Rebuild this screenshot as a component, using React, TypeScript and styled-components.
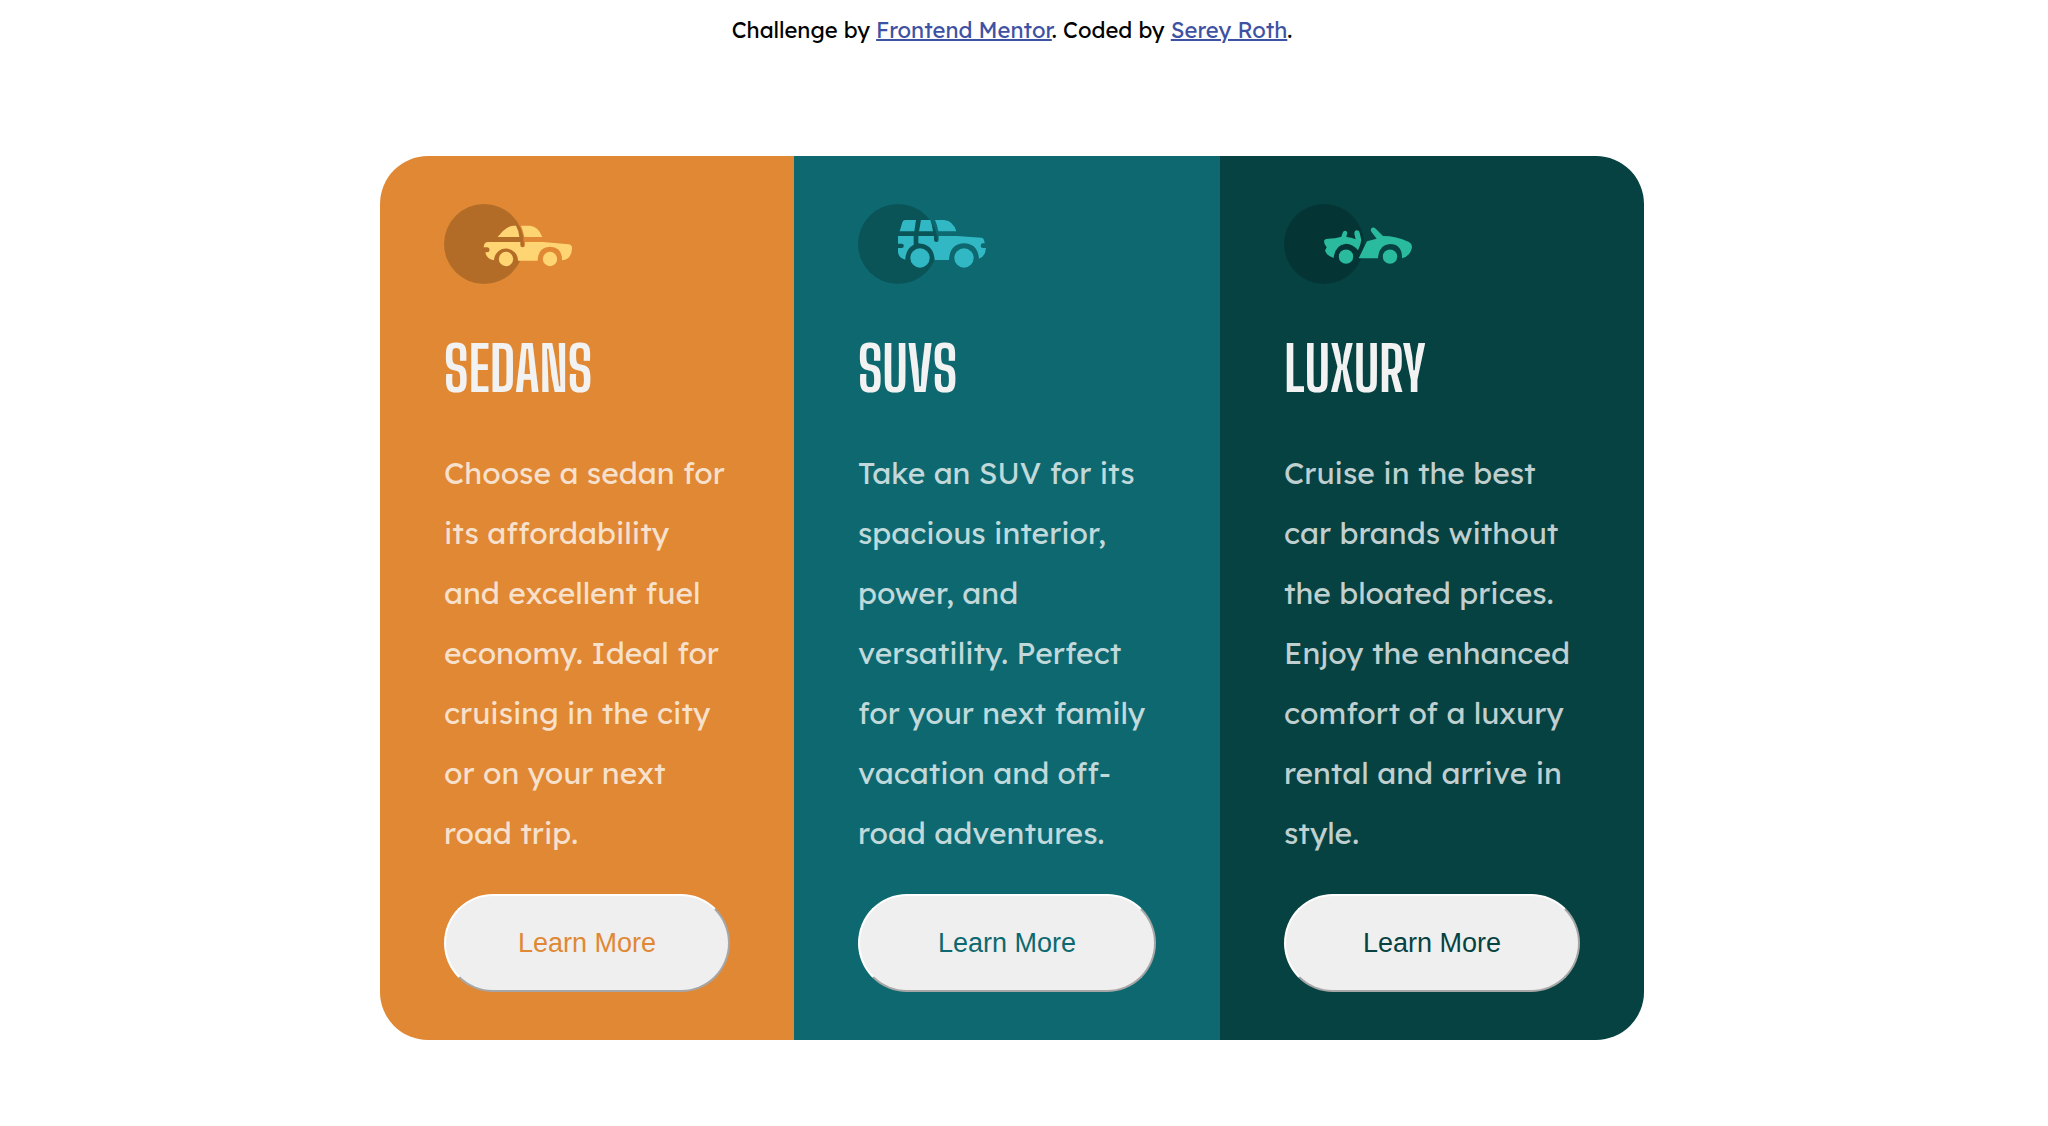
import React from "react";
import styled, { createGlobalStyle } from "styled-components";

const GlobalStyle = createGlobalStyle`
  * {
    box-sizing: border-box;
  }

  body {
    margin: 0;
    background: #ffffff;
    font-family: "Lexend Deca", Lexend, Inter, "Noto Sans", sans-serif;
  }
`;

const Page = styled.div`
  display: flex;
  flex-direction: column;
  align-items: center;
  padding: 16px 56px 64px 32px;
`;

const Attribution = styled.header`
  margin-bottom: 112px;
  font-size: 22px;
  line-height: 28px;
  text-align: center;
  color: #000000;
`;

const AttributionLink = styled.a`
  color: #3e52a3;
  text-decoration-thickness: 2px;
`;

const Cards = styled.main`
  display: grid;
  grid-template-columns: 414fr 426fr 424fr;
  width: 100%;
  max-width: 1264px;
  border-radius: 48px;
  overflow: hidden;
`;

const Card = styled.section<{ $color: string }>`
  display: flex;
  flex-direction: column;
  padding: 48px 64px;
  background: ${({ $color }) => $color};
`;

const Icon = styled.svg`
  display: block;
  width: 128px;
  height: 80px;
`;

const Title = styled.h2`
  margin: 45px 0 34px;
  font-family: "Big Shoulders Display", "Roboto Condensed", "Liberation Sans Narrow", sans-serif;
  font-size: 60px;
  font-weight: 700;
  line-height: 80px;
  text-transform: uppercase;
  color: #f2f2f2;
`;

const Description = styled.p`
  margin: 0 0 31px;
  font-size: 30px;
  line-height: 60px;
  color: rgba(255, 255, 255, 0.75);
`;

const LearnMore = styled.button<{ $color: string }>`
  width: 100%;
  height: 98px;
  margin-top: auto;
  border: 2px solid;
  border-color: #ffffff #a6a6a6 #a6a6a6 #ffffff;
  border-radius: 50px;
  background: #efefef;
  font-family: "Liberation Sans", Arial, sans-serif;
  font-size: 27px;
  color: ${({ $color }) => $color};
  cursor: pointer;
`;

const SedanIcon = () => (
  <Icon viewBox="42 42 384 240" aria-hidden="true">
    <circle cx="162" cy="162" r="120" fill="#000" opacity="0.2" />
    <g fill="#ffd473">
      <path d="M203 141C215 125 232 108 250 107H258Q266 120 268 141Z" />
      <path d="M273 107H300Q325 109 337 141H283Q279 122 273 107Z" />
      <path d="M174 156H271V165q0 7 7 7q7 0 7-7V156H340L415 163Q427 164 426 176Q424 208 396 211Q397 171 360 170Q324 171 323 212H264A36 36 0 0 0 192 211Q170 208 166 187H171a7.500 7.500 0 0 0 0-15H161Q162 156 174 156Z" />
      <circle cx="228" cy="207" r="21.500" />
      <circle cx="360" cy="207" r="21.500" />
    </g>
  </Icon>
);

const SuvIcon = () => (
  <Icon viewBox="39 42 384 240" aria-hidden="true">
    <circle cx="159" cy="162" r="120" fill="#000" opacity="0.2" />
    <g fill="#32b8c4">
      <path d="M164 124L172 97Q174 90 181 90H213L208 124Z" />
      <path d="M228 90H256Q262 106 264 124H222Z" />
      <path d="M270 90H297Q325 93 334 124H280Q277 105 270 90Z" />
      <path d="M159 138H206V164Q182 176 181 209Q163 205 159 188V174H170a6.500 6.500 0 0 0 0-13H159Z" />
      <path d="M220 138H267V150q0 6 7 6q7 0 7-6V138H335L410 143Q418 145 419 160H414a7 7 0 0 0 0 14H423Q421 200 402 206Q398 161 357 160Q314 162 312 210H269Q266 163 220 160Z" />
      <circle cx="225" cy="204" r="29" />
      <circle cx="357" cy="204" r="29" />
    </g>
  </Icon>
);

const LuxuryIcon = () => (
  <Icon viewBox="42 42 384 240" aria-hidden="true">
    <circle cx="162" cy="162" r="120" fill="#000" opacity="0.2" />
    <g fill="#2abb9f">
      <path d="M162 152Q164 146 174 146Q196 146 214 140L218 128Q221 121 228 123Q233 126 231 132L229 141Q245 142 257 148L253 131Q253 122 260 121Q267 121 269 128L274 150Q272 165 264 181Q248 161 228 161Q194 165 191 204Q172 199 165 182L170 172Q162 164 162 152Z" />
      <path d="M266 205L290 155Q292 152 297 152L320 146L304 125Q300 117 306 113Q312 111 317 116L339 138Q380 138 415 155Q426 160 426 171Q422 198 396 205Q397 163 360 162Q326 164 324 205Z" />
      <circle cx="228" cy="200" r="21.500" />
      <circle cx="360" cy="200" r="21.500" />
    </g>
  </Icon>
);

const vehicles = [
  {
    name: "Sedans",
    color: "#e08833",
    icon: <SedanIcon />,
    text: "Choose a sedan for its affordability and excellent fuel economy. Ideal for cruising in the city or on your next road trip.",
  },
  {
    name: "SUVs",
    color: "#0d696f",
    icon: <SuvIcon />,
    text: "Take an SUV for its spacious interior, power, and versatility. Perfect for your next family vacation and off-road adventures.",
  },
  {
    name: "Luxury",
    color: "#064241",
    icon: <LuxuryIcon />,
    text: "Cruise in the best car brands without the bloated prices. Enjoy the enhanced comfort of a luxury rental and arrive in style.",
  },
];

export default function App() {
  return (
    <>
      <GlobalStyle />
      <Page>
        <Attribution>
          Challenge by{" "}
          <AttributionLink href="#frontend-mentor">Frontend Mentor</AttributionLink>. Coded by{" "}
          <AttributionLink href="#serey-roth">Serey Roth</AttributionLink>.
        </Attribution>
        <Cards>
          {vehicles.map(({ name, color, icon, text }) => (
            <Card key={name} $color={color}>
              {icon}
              <Title>{name}</Title>
              <Description>{text}</Description>
              <LearnMore type="button" $color={color}>
                Learn More
              </LearnMore>
            </Card>
          ))}
        </Cards>
      </Page>
    </>
  );
}
